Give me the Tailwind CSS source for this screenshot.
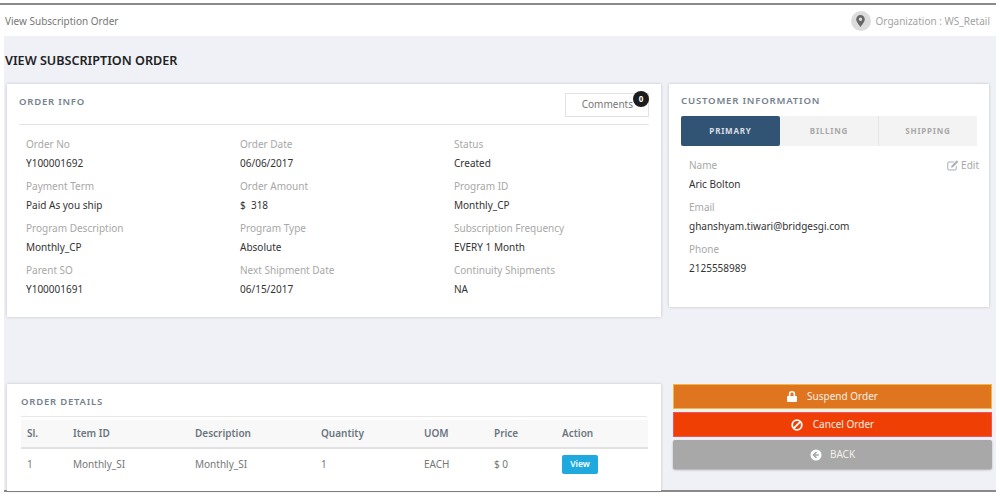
<!DOCTYPE html>
<html lang="en">
<head>
  <meta charset="UTF-8">
  <title>View Subscription Order</title>
  <script src="https://cdn.jsdelivr.net/npm/@tailwindcss/browser@4"></script>
</head>
<body class="bg-white h-[496px] overflow-hidden font-['Noto_Sans',sans-serif] text-[10px] text-[#333]">
  <div class="w-[996px] pt-[3px]">
    <div class="border-t-2 border-[#8a8a8a]">
      <!-- top bar -->
      <div class="h-[31px] flex items-center justify-between pl-[5px] pr-[6px] pt-[1px] text-[#777]">
        <span class="text-[10px]">View Subscription Order</span>
        <div class="flex items-center gap-[5px] text-[#a3a3a3]">
          <span class="w-5 h-5 rounded-full bg-[#dcdcdc] flex items-center justify-center">
            <svg width="9" height="12" viewBox="0 0 9 12"><path fill="#666" fill-rule="evenodd" d="M4.5 0a4.3 4.3 0 0 0-4.3 4.3c0 2.4 3 6 4.3 7.7 1.3-1.7 4.3-5.3 4.3-7.7A4.3 4.3 0 0 0 4.5 0zm0 2.6a1.7 1.7 0 1 1 0 3.4 1.7 1.7 0 0 1 0-3.4z"/></svg>
          </span>
          <span class="text-[10px]">Organization : WS_Retail</span>
        </div>
      </div>

      <main class="ml-[4px] h-[456px] bg-[#eff1f7] border-b-2 border-[#8a8a8a]">
        <h1 class="pl-[1px] pt-[16px] h-[48px] text-[12.6px] font-semibold text-[#222] leading-[18px]">VIEW SUBSCRIPTION ORDER</h1>

        <div class="flex items-start pl-[3px] gap-[8px]">
          <!-- order info -->
          <section class="w-[654px] h-[233px] bg-white shadow-[0_0_3px_rgba(0,0,0,0.2)] px-[12px]">
            <div class="h-[41px] flex items-center justify-between border-b border-[#e4e4e4]">
              <h2 class="mb-[3px] text-[9.5px] font-semibold tracking-[0.8px] text-[#75828c]">ORDER INFO</h2>
              <div class="relative w-[84px] h-[24px] mt-[1px] border border-[#e2e2e2] flex items-center justify-end pr-[15px] text-[#777]">
                Comments
                <span class="absolute -top-[3px] -right-[1px] w-[16px] h-[16px] rounded-full bg-[#1c1c1c] text-white text-[8px] font-bold flex items-center justify-center">0</span>
              </div>
            </div>
            <div class="grid grid-cols-[214px_214px_1fr] pl-[7px] pt-[12px] text-[10px] gap-y-[9px]">
              <div><p class="text-[#a8a8a8] leading-[14px]">Order No</p><p class="mt-[5px] leading-[14px]">Y100001692</p></div>
              <div><p class="text-[#a8a8a8] leading-[14px]">Order Date</p><p class="mt-[5px] leading-[14px]">06/06/2017</p></div>
              <div><p class="text-[#a8a8a8] leading-[14px]">Status</p><p class="mt-[5px] leading-[14px]">Created</p></div>
              <div><p class="text-[#a8a8a8] leading-[14px]">Payment Term</p><p class="mt-[5px] leading-[14px]">Paid As you ship</p></div>
              <div><p class="text-[#a8a8a8] leading-[14px]">Order Amount</p><p class="mt-[5px] leading-[14px]">$&nbsp; 318</p></div>
              <div><p class="text-[#a8a8a8] leading-[14px]">Program ID</p><p class="mt-[5px] leading-[14px]">Monthly_CP</p></div>
              <div><p class="text-[#a8a8a8] leading-[14px]">Program Description</p><p class="mt-[5px] leading-[14px]">Monthly_CP</p></div>
              <div><p class="text-[#a8a8a8] leading-[14px]">Program Type</p><p class="mt-[5px] leading-[14px]">Absolute</p></div>
              <div><p class="text-[#a8a8a8] leading-[14px]">Subscription Frequency</p><p class="mt-[5px] leading-[14px]">EVERY 1 Month</p></div>
              <div><p class="text-[#a8a8a8] leading-[14px]">Parent SO</p><p class="mt-[5px] leading-[14px]">Y100001691</p></div>
              <div><p class="text-[#a8a8a8] leading-[14px]">Next Shipment Date</p><p class="mt-[5px] leading-[14px]">06/15/2017</p></div>
              <div><p class="text-[#a8a8a8] leading-[14px]">Continuity Shipments</p><p class="mt-[5px] leading-[14px]">NA</p></div>
            </div>
          </section>

          <!-- customer -->
          <section class="w-[320px] h-[223px] bg-white shadow-[0_0_3px_rgba(0,0,0,0.2)] px-[12px] pt-[10px]">
            <h2 class="text-[9.6px] font-semibold tracking-[0.8px] text-[#75828c] leading-[14px]">CUSTOMER INFORMATION</h2>
            <div class="mt-[8px] h-[30px] flex text-[8px] font-bold tracking-[0.8px] text-[#a8a8a8] bg-[#f3f3f3]">
              <div class="w-[99px] bg-[#315474] text-[#d8dfe6] rounded-[2px] flex items-center justify-center">PRIMARY</div>
              <div class="w-[99px] border-r border-[#e6e6e6] flex items-center justify-center">BILLING</div>
              <div class="flex-1 flex items-center justify-center">SHIPPING</div>
            </div>
            <div class="relative pl-[8px] pt-[12px]">
              <span class="absolute -right-[2px] top-[12px] flex items-center gap-[2px] text-[#a8a8a8]">
                <svg width="12" height="11" viewBox="0 0 12 11"><path fill="#a8b0b8" d="M2 1.5h5.5L6.5 2.5H2a.7.7 0 0 0-.7.7v5.6c0 .4.3.7.7.7h6a.7.7 0 0 0 .7-.7V6.5l1-1v3.3A1.7 1.7 0 0 1 8 10.5H2A1.7 1.7 0 0 1 .3 8.8V3.2A1.7 1.7 0 0 1 2 1.5zM9.8.3l1.5 1.5L6 7.2l-2 .5.5-2z"/></svg>
                Edit
              </span>
              <p class="text-[#a8a8a8] leading-[14px]">Name</p><p class="mt-[5px] leading-[14px]">Aric Bolton</p>
              <p class="mt-[9px] text-[#a8a8a8] leading-[14px]">Email</p><p class="mt-[5px] leading-[14px]">ghanshyam.tiwari@bridgesgi.com</p>
              <p class="mt-[9px] text-[#a8a8a8] leading-[14px]">Phone</p><p class="mt-[5px] leading-[14px]">2125558989</p>
            </div>
          </section>
        </div>

        <div class="flex items-start pl-[3px] mt-[67px] gap-[12px]">
          <!-- order details -->
          <section class="w-[654px] h-[107px] bg-white shadow-[0_0_3px_rgba(0,0,0,0.2)] px-[14px]">
            <h2 class="h-[33px] pt-[4px] flex items-center border-b border-[#e8e8e8] text-[9.5px] font-semibold tracking-[0.8px] text-[#75828c]">ORDER DETAILS</h2>
            <table class="mt-[3px] w-[627px] table-fixed text-left text-[#777]">
              <thead>
                <tr class="h-[28px] bg-[#f8f8f8] border-b-2 border-[#e2e2e2] font-semibold text-[#6b7680]">
                  <th class="w-[52px] pl-[6px] font-semibold">Sl.</th>
                  <th class="w-[122px] font-semibold">Item ID</th>
                  <th class="w-[126px] font-semibold">Description</th>
                  <th class="w-[103px] font-semibold">Quantity</th>
                  <th class="w-[70px] font-semibold">UOM</th>
                  <th class="w-[68px] font-semibold">Price</th>
                  <th class="font-semibold">Action</th>
                </tr>
              </thead>
              <tbody>
                <tr class="h-[31px]">
                  <td class="pl-[6px]">1</td>
                  <td>Monthly_SI</td>
                  <td>Monthly_SI</td>
                  <td>1</td>
                  <td>EACH</td>
                  <td>$&nbsp;0</td>
                  <td><span class="inline-flex items-center justify-center w-[36px] h-[19px] rounded-[2px] bg-[#1fa9de] text-white text-[8.5px] font-semibold">View</span></td>
                </tr>
              </tbody>
            </table>
          </section>

          <!-- actions -->
          <div class="w-[319px] flex flex-col text-[10px] text-[#f4efe8]">
            <button class="h-[25px] bg-[#e0751f] border border-[#f0b840] flex items-center justify-center gap-[10px]">
              <svg width="10" height="11" viewBox="0 0 10 11"><path fill="#fff" fill-rule="evenodd" d="M5 0a3.2 3.2 0 0 0-3.2 3.2V5H1a1 1 0 0 0-1 1v4a1 1 0 0 0 1 1h8a1 1 0 0 0 1-1V6a1 1 0 0 0-1-1h-.8V3.2A3.2 3.2 0 0 0 5 0zm0 1.6c.9 0 1.6.7 1.6 1.6V5H3.4V3.2c0-.9.7-1.6 1.6-1.6z"/></svg>
              Suspend Order
            </button>
            <button class="mt-[3px] h-[25px] bg-[#f03f04] border border-[#ee5560] flex items-center justify-center gap-[10px]">
              <svg width="12" height="12" viewBox="0 0 12 12"><circle cx="6" cy="6" r="4.8" fill="none" stroke="#fff" stroke-width="1.8"/><path d="M2.8 9.2l6.4-6.4" stroke="#fff" stroke-width="1.8"/></svg>
              Cancel Order
            </button>
            <button class="mt-[3px] h-[29px] bg-[#a8a8a8] rounded-[2px] shadow-[0_1px_2px_rgba(0,0,0,0.3)] flex items-center justify-center gap-[8px]">
              <svg width="12" height="12" viewBox="0 0 12 12"><circle cx="6" cy="6" r="5.5" fill="#fff"/><path d="M6.5 3L3.5 6l3 3M3.8 6h5" fill="none" stroke="#a8a8a8" stroke-width="1.6"/></svg>
              BACK
            </button>
          </div>
        </div>
      </main>
    </div>
  </div>
</body>
</html>
